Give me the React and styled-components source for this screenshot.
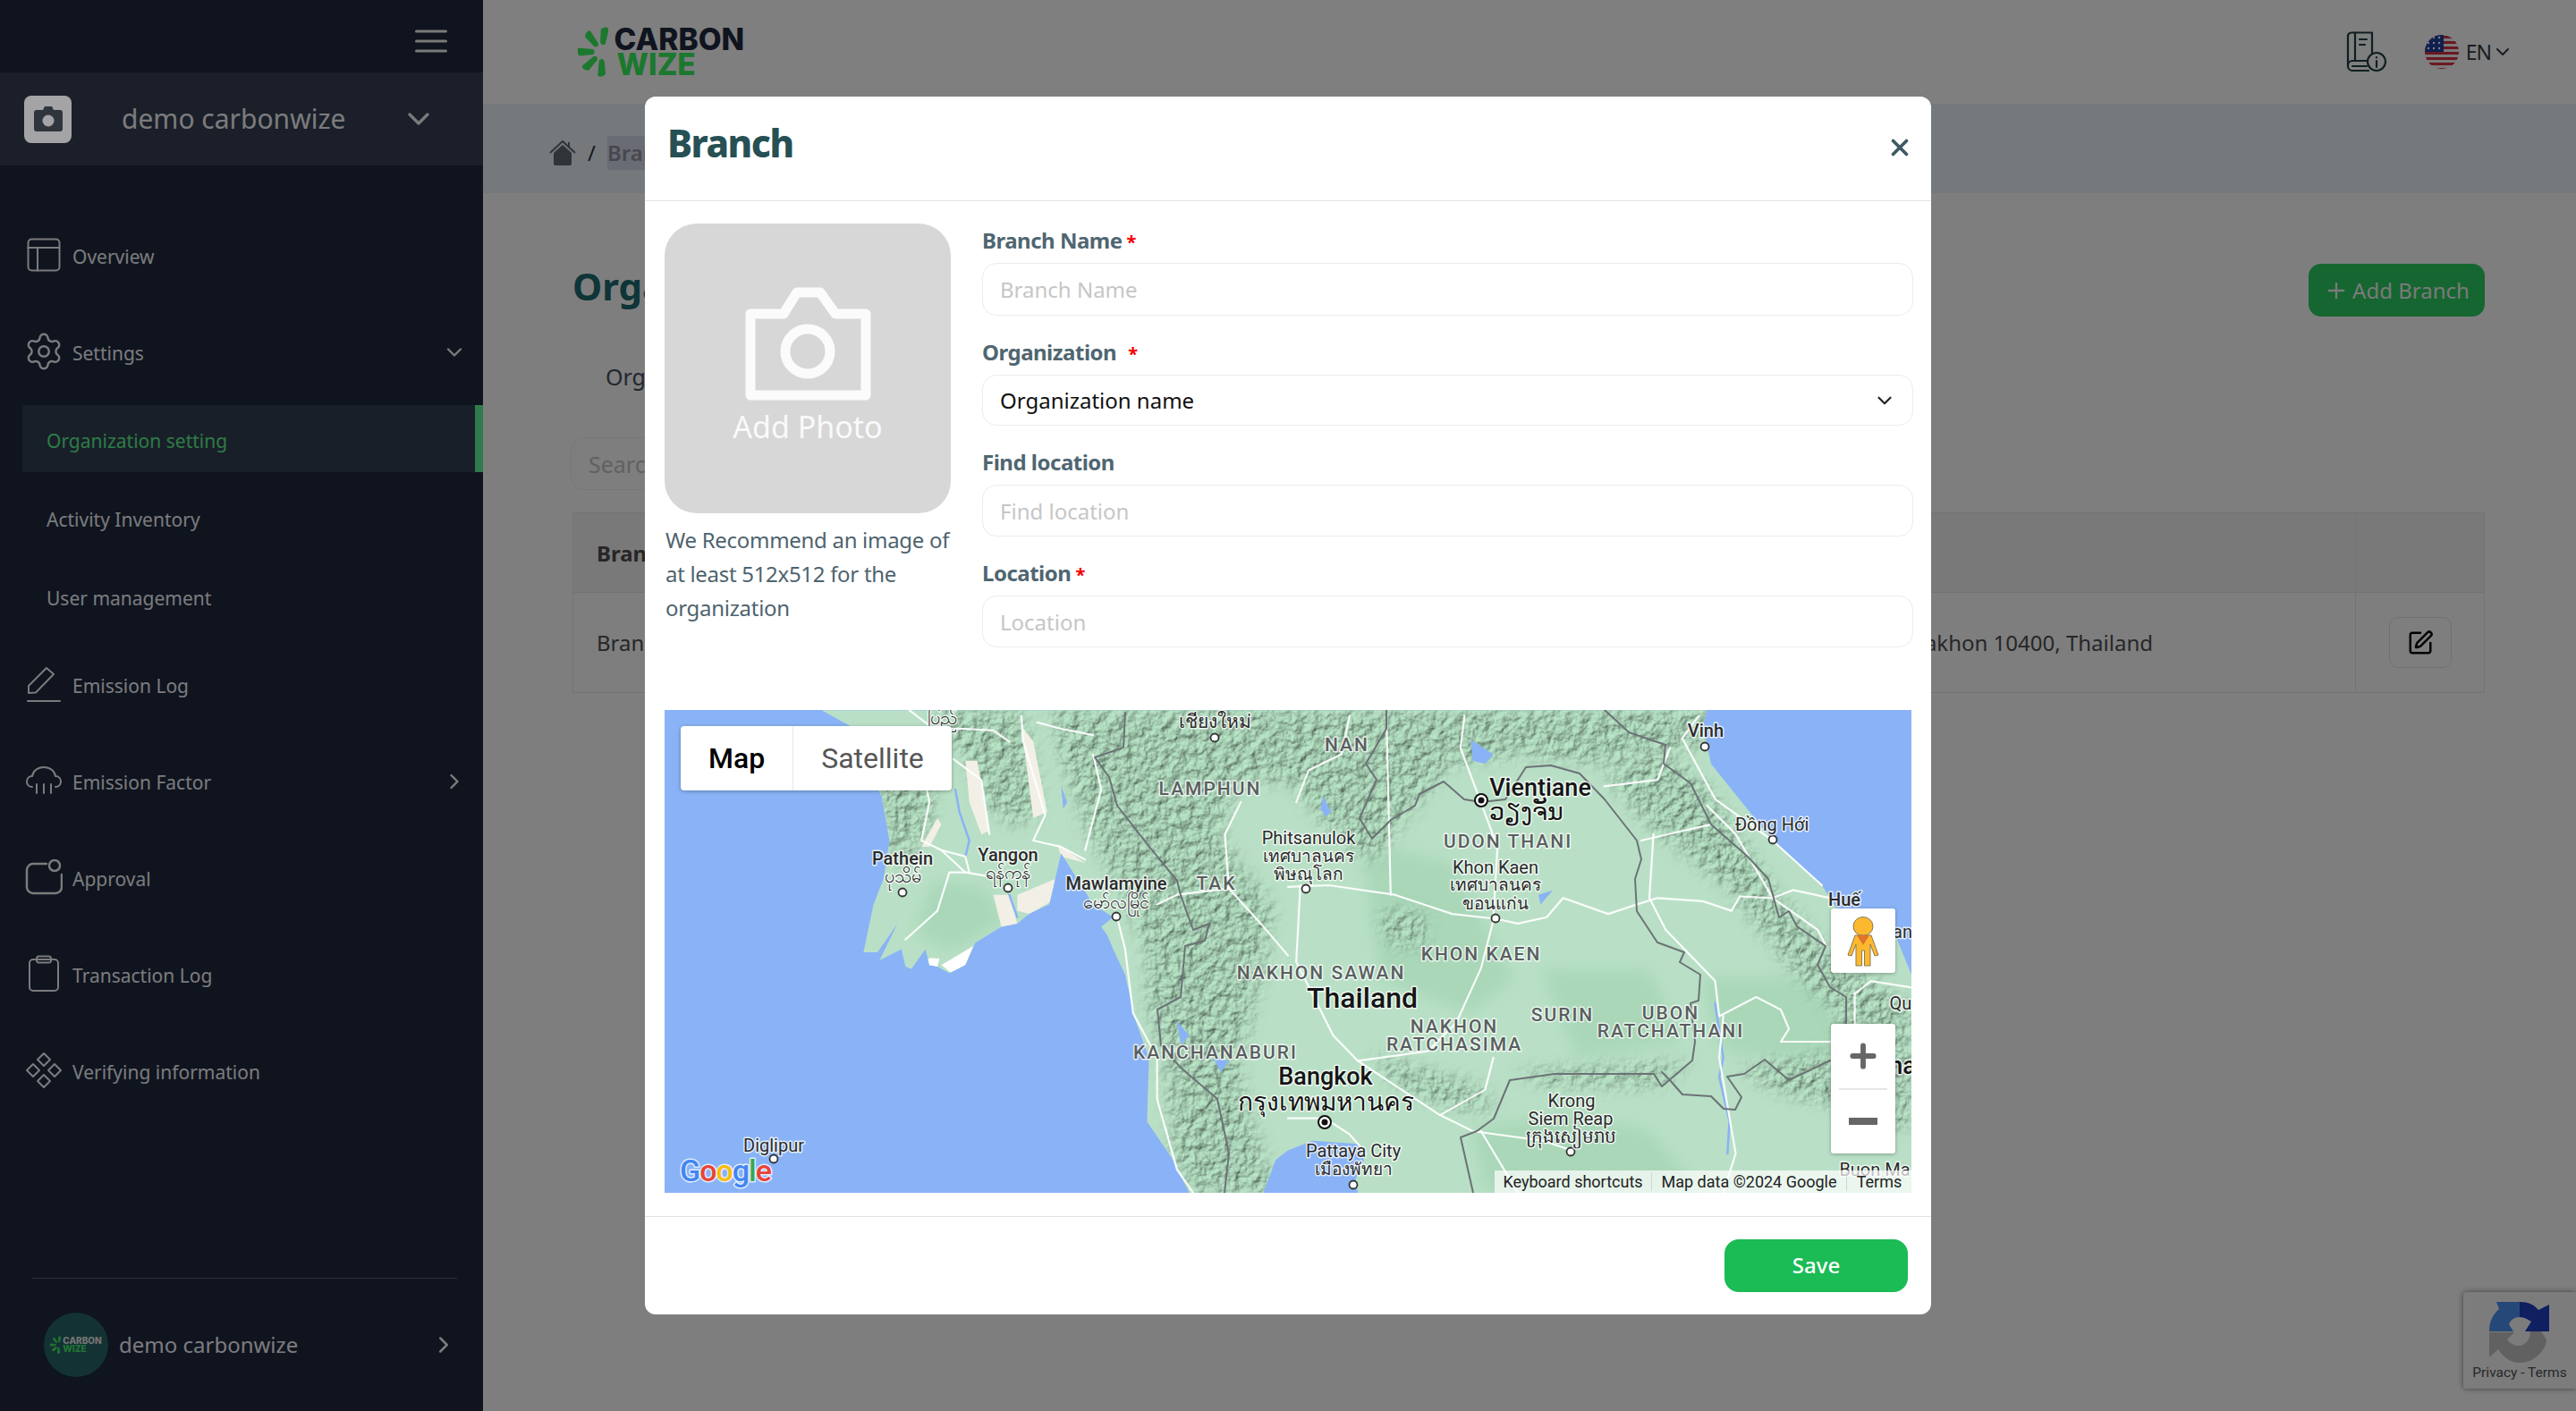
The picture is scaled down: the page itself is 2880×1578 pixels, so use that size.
import React from 'react';
import styled, { createGlobalStyle } from 'styled-components';
import { Settings, SquarePen, ChevronDown, ChevronRight, Plus, X } from 'lucide-react';

const GlobalStyle = createGlobalStyle`
  html, body { margin: 0; padding: 0; }
  body { font-family: "Noto Sans", "Open Sans", sans-serif; background: #fdfdfd; }
  * { box-sizing: border-box; }
`;

/* Layout */
const Page = styled.div`
  display: grid;
  grid-template-columns: 540px 1fr;
  width: 2880px;
  height: 1578px;
  overflow: hidden;
  position: relative;
`;

const Sidebar = styled.aside`
  display: flex;
  flex-direction: column;
  background: #1e283e;
  color: #f6f6fa;
`;

const BurgerBar = styled.div`
  height: 81px;
  display: flex;
  align-items: center;
  justify-content: flex-end;
  padding: 11px 40px 0 0;
`;

const OrgBar = styled.div`
  height: 104px;
  display: flex;
  align-items: center;
  padding: 0 52px 0 27px;
  background: #343e52;
`;

/* sits above the dimming layer, it stays lighter than the rest in the reference */
const OrgThumb = styled.div`
  position: relative;
  z-index: 1;
  width: 53px;
  height: 53px;
  border-radius: 8px;
  background: #a4a4a6;
  display: flex;
  align-items: center;
  justify-content: center;
`;

const OrgName = styled.div`
  flex: 1;
  margin-left: 56px;
  font-size: 30px;
  line-height: 40px;
`;

const Nav = styled.nav`
  margin-top: 26px;
  border-top: 1px solid #262f44;
  padding-top: 22px;
  display: flex;
  flex-direction: column;
`;

const NavRow = styled.div`
  height: 108px;
  display: flex;
  align-items: center;
  padding-left: 27px;
  padding-right: 18px;
  font-size: 21px;
  svg { flex-shrink: 0; }
`;

const NavIcon = styled.span`
  width: 44px;
  height: 48px;
  display: flex;
  align-items: center;
  justify-content: center;
  margin-right: 10px;
  margin-top: -6px;
`;

const NavLabel = styled.span`
  flex: 1;
  padding-bottom: 3px;
`;

const NavArrow = styled.span`
  display: flex;
  margin-top: -4px;
`;

const SubRow = styled.div`
  height: ${p => (p.$active ? 75 : 88)}px;
  margin: ${p => (p.$active ? '3px 0 10px 25px' : '0')};
  padding-left: ${p => (p.$active ? 27 : 52)}px;
  padding-top: ${p => (p.$active ? 4 : 0)}px;
  padding-bottom: ${p => (p.$active ? 0 : 3)}px;
  display: flex;
  align-items: center;
  font-size: 21px;
  color: ${p => (p.$active ? '#5cf58c' : 'inherit')};
  background: ${p => (p.$active ? '#303e52' : 'transparent')};
  border-right: ${p => (p.$active ? '9px solid #5cf898' : '0')};
`;

const UserBlock = styled.div`
  margin: auto 29px 38px 36px;
  border-top: 1px solid #5a6274;
  padding: 38px 0 0 13px;
  display: flex;
  align-items: center;
`;

const UserAvatar = styled.div`
  width: 72px;
  height: 72px;
  border-radius: 50%;
  background: #266468;
  display: flex;
  align-items: center;
  justify-content: center;
  gap: 2px;
`;

const AvatarWords = styled.div`
  font-family: Inter, sans-serif;
  font-weight: 800;
  font-size: 10px;
  line-height: 9px;
  color: #e6e6e6;
  span { display: block; color: #44e468; }
`;

const UserName = styled.div`
  flex: 1;
  margin-left: 12px;
  font-size: 24px;
  padding-bottom: 2px;
`;

const Main = styled.main`
  display: flex;
  flex-direction: column;
  min-width: 0;
`;

const TopBar = styled.header`
  height: 116px;
  display: flex;
  align-items: center;
  padding: 0 70px 0 106px;
  background: #ffffff;
`;

const Logo = styled.div`
  display: flex;
  align-items: center;
  gap: 7px;
  flex: 1;
`;

const LogoWords = styled.div`
  font-family: Inter, sans-serif;
  font-weight: 800;
  font-size: 33.500px;
  line-height: 28px;
  color: #1e283e;
  span { display: block; color: #38f05c; margin-left: 3px; }
`;

const TopActions = styled.div`
  display: flex;
  align-items: center;
  color: #333b45;
  font-size: 23px;
`;

const Lang = styled.span`
  margin: 0 1px 0 8px;
  letter-spacing: -1px;
`;

const Crumbs = styled.div`
  height: 100px;
  background: #eaf2f8;
  display: flex;
  align-items: center;
  padding: 9px 0 0 74px;
  gap: 13px;
  font-size: 24px;
  color: #2a3440;
`;

const CrumbCurrent = styled.span`
  background: #d4d9ea;
  color: #8d919c;
  font-weight: 600;
  line-height: 38px;
  padding-right: 60px;
`;

const Content = styled.div`
  padding: 79px 102px 0 100px;
`;

const TitleRow = styled.div`
  height: 59px;
  display: flex;
  align-items: center;
  justify-content: space-between;
`;

const PageTitle = styled.h1`
  margin: 0;
  padding-bottom: 10px;
  font-size: 42px;
  font-weight: 700;
  color: #1c6a70;
`;

const AddButton = styled.button`
  height: 59px;
  width: 197px;
  border: 0;
  border-radius: 14px;
  background: #2acc60;
  color: #f4f4f4;
  font: 400 24px "Noto Sans", sans-serif;
  display: flex;
  align-items: center;
  justify-content: center;
  gap: 4px;
`;

const TabLine = styled.div`
  margin-top: 44px;
  padding-left: 37px;
  font-size: 25px;
  line-height: 46px;
  color: #444e5c;
`;

const SearchBox = styled.div`
  margin-top: 45px;
  margin-left: -2px;
  width: 300px;
  height: 59px;
  border: 1px solid #eeeeee;
  border-radius: 16px;
  padding-left: 19px;
  display: flex;
  align-items: center;
  font-size: 25px;
  color: #c2c2c2;
`;

const Table = styled.div`
  margin-top: 25px;
  border: 1px solid #e6e6e6;
`;

const TableRow = styled.div`
  display: grid;
  grid-template-columns: 1fr 144px;
  height: ${p => (p.$head ? 89 : 111)}px;
  background: ${p => (p.$head ? '#f3f3f3' : 'transparent')};
  border-bottom: ${p => (p.$head ? '1px solid #e6e6e6' : '0')};
`;

const TableCell = styled.div`
  display: flex;
  align-items: center;
  justify-content: ${p => (p.$center ? 'center' : 'space-between')};
  padding: ${p => (p.$center ? '0' : '0 226px 0 26px')};
  border-left: ${p => (p.$center ? '1px solid #e6e6e6' : '0')};
  font-size: 24px;
  font-weight: ${p => (p.$head ? 700 : 400)};
  color: #4c4c50;
`;

const EditButton = styled.div`
  width: 70px;
  height: 57px;
  border: 1px solid #e0e0e0;
  border-radius: 10px;
  display: flex;
  align-items: center;
  justify-content: center;
  color: #000;
`;

const RecaptchaBadge = styled.div`
  position: absolute;
  right: 0;
  top: 1445px;
  width: 126px;
  height: 108px;
  background: #f9f9f9;
  border-radius: 3px 0 0 3px;
  box-shadow: 0 0 6px rgba(0, 0, 0, 0.5);
  display: flex;
  flex-direction: column;
  align-items: center;
  padding-top: 11px;
  font-family: Roboto, sans-serif;
  font-size: 15.500px;
  color: #505050;
  gap: 2px;
`;

/* Modal */
const Overlay = styled.div`
  position: absolute;
  inset: 0;
  background: rgba(0, 0, 0, 0.5);
  display: flex;
  justify-content: center;
  align-items: flex-start;
  padding-top: 108px;
`;

const Modal = styled.section`
  width: 1438px;
  height: 1362px;
  background: #fff;
  border-radius: 12px;
  display: flex;
  flex-direction: column;
`;

const ModalHead = styled.div`
  height: 117px;
  border-bottom: 1px solid #e3e3e3;
  display: flex;
  align-items: flex-start;
  justify-content: space-between;
  padding: 23px 20px 0 25px;
`;

const ModalTitle = styled.h2`
  margin: 0;
  font-size: 42px;
  line-height: 58px;
  font-weight: 800;
  letter-spacing: -1.500px;
  color: #265054;
`;

const CloseButton = styled.span`
  margin-top: 19px;
  color: #3f5a64;
  display: flex;
`;

const ModalBody = styled.div`
  padding: 25px 20px 0 22px;
`;

const FormGrid = styled.div`
  display: grid;
  grid-template-columns: 320px 1fr;
  gap: 35px;
  height: 544px;
`;

const PhotoColumn = styled.div`
  display: flex;
  flex-direction: column;
`;

const PhotoBox = styled.div`
  height: 324px;
  border-radius: 36px;
  background: #d7d7d7;
  display: flex;
  flex-direction: column;
  align-items: center;
  padding-top: 71px;
`;

const PhotoText = styled.div`
  font-size: 34px;
  line-height: 42px;
  color: #fafafa;
  margin-top: 8px;
`;

const PhotoHint = styled.p`
  margin: 11px 0 0 1px;
  font-size: 24px;
  line-height: 38px;
  letter-spacing: -0.3px;
  color: #4e636e;
`;

const Fields = styled.div`
  display: flex;
  flex-direction: column;
  gap: 22px;
`;

const Label = styled.label`
  display: block;
  height: 38px;
  margin-bottom: 6px;
  font-size: 24px;
  line-height: 37px;
  font-weight: 700;
  letter-spacing: -0.5px;
  color: #4f6671;
`;

const Req = styled.span`
  color: #f40000;
  font-size: 20px;
  margin-left: ${p => p.$gap || 5}px;
`;

const InputBox = styled.div`
  height: ${p => p.$h || 58}px;
  border: 1px solid #ececec;
  border-radius: 16px;
  padding: 0 18px 0 19px;
  display: flex;
  align-items: center;
  justify-content: space-between;
  font-size: 24px;
  color: ${p => (p.$filled ? '#111' : '#c6c6c6')};
`;

const MapFrame = styled.div`
  position: relative;
  width: 1394px;
  height: 540px;
  overflow: hidden;
  background: #89b3f6;
  font-family: Roboto, sans-serif;
`;

const MapSvg = styled.svg`
  display: block;
`;

const MapLabel = styled.text`
  font-family: Roboto, "Noto Sans", sans-serif;
  text-anchor: middle;
  font-size: ${p => p.$size || 20}px;
  font-weight: ${p => p.$weight || 400};
  letter-spacing: ${p => p.$track || 0}px;
  fill: ${p => p.$color || '#2b2b2b'};
  stroke: rgba(255, 255, 255, 0.75);
  stroke-width: 3px;
  paint-order: stroke;
  stroke-linejoin: round;
`;

const MapTypes = styled.div`
  position: absolute;
  left: 18px;
  top: 18px;
  height: 72px;
  display: flex;
  background: #fff;
  border-radius: 4px;
  box-shadow: 0 1px 4px rgba(0, 0, 0, 0.3);
`;

const MapType = styled.div`
  height: 72px;
  width: ${p => p.$w}px;
  display: flex;
  align-items: center;
  justify-content: center;
  font-size: 32px;
  font-weight: ${p => (p.$active ? 500 : 400)};
  color: ${p => (p.$active ? '#000' : '#565656')};
  border-left: ${p => (p.$active ? '0' : '1px solid #e6e6e6')};
`;

const MapButton = styled.div`
  position: absolute;
  right: 18px;
  top: ${p => p.$top}px;
  width: 72px;
  height: ${p => p.$h}px;
  padding-top: ${p => p.$pad || 0}px;
  background: #fff;
  border-radius: 3px;
  box-shadow: 0 1px 4px rgba(0, 0, 0, 0.3);
  display: flex;
  flex-direction: column;
  align-items: center;
`;

const ZoomPart = styled.div`
  flex: 1;
  width: 54px;
  display: flex;
  align-items: center;
  justify-content: center;
  border-bottom: ${p => (p.$split ? '2px solid #e6e6e6' : '0')};
`;

const MapFooter = styled.div`
  position: absolute;
  right: 0;
  bottom: 0;
  height: 25px;
  width: 466px;
  display: flex;
  align-items: center;
  background: rgba(255, 255, 255, 0.7);
  font-size: 18px;
  color: #222;
  white-space: nowrap;
`;

const FooterCell = styled.span`
  width: ${p => p.$w}px;
  text-align: center;
  border-right: ${p => (p.$line ? '1px solid #d5d5d5' : '0')};
`;

const ModalFoot = styled.div`
  margin-top: 26px;
  border-top: 1px solid #e3e3e3;
  flex: 1;
  display: flex;
  justify-content: flex-end;
  padding: 25px 26px 0 0;
`;

const SaveButton = styled.button`
  width: 205px;
  height: 59px;
  border: 0;
  border-radius: 16px;
  background: #1bbb55;
  color: #fff;
  font: 500 24px "Noto Sans", sans-serif;
  padding-bottom: 3px;
`;

/* Icons */
const line = { fill: 'none', stroke: 'currentColor', strokeLinecap: 'round', strokeLinejoin: 'round' };

const Burger = () => (
  <svg width="36" height="26" viewBox="0 0 36 26" {...line} strokeWidth="3" color="#f4f4f4">
    <path d="M1.5 2h33M1.5 13h33M1.5 24h33" />
  </svg>
);

const OverviewIcon = () => (
  <svg width="38" height="38" viewBox="0 0 38 38" {...line} strokeWidth="2">
    <rect x="1.5" y="1.5" width="35" height="35" rx="4" />
    <path d="M1.5 11h35M12 11v25.5" />
  </svg>
);

const PencilIcon = () => (
  <svg width="38" height="42" viewBox="0 0 38 42" {...line} strokeWidth="2">
    <path d="M2 31v-8L22 3l8 7-20 20.500z" />
    <path d="M1 40h36" />
  </svg>
);

const CloudIcon = () => (
  <svg width="40" height="32" viewBox="0 0 40 32" {...line} strokeWidth="2">
    <path d="M7 23C3 23 1 20 1 17c0-3 2-6 6-6 1-6 6-10 13-10 7 0 12 4 13 10 4 0 6 3 6 6s-2 6-6 6" />
    <path d="M12 20v10M20 20v10M28 20v10" />
  </svg>
);

const ApprovalIcon = () => (
  <svg width="42" height="40" viewBox="0 0 42 40" {...line} strokeWidth="2.500">
    <path d="M24 5H9a7 7 0 0 0-7 7v19a7 7 0 0 0 7 7h25a7 7 0 0 0 7-7v-14" />
    <circle cx="33" cy="7" r="6" />
  </svg>
);

const ClipboardIcon = () => (
  <svg width="36" height="42" viewBox="0 0 36 42" {...line} strokeWidth="2">
    <rect x="2" y="5" width="32" height="35" rx="4" />
    <rect x="10" y="1.500" width="16" height="7" rx="2.500" />
  </svg>
);

const DiamondsIcon = () => (
  <svg width="42" height="42" viewBox="0 0 42 42" {...line} strokeWidth="2">
    <path d="M21 2l7 7-7 7-7-7zM9 14l7 7-7 7-7-7zM33 14l7 7-7 7-7-7zM21 26l7 7-7 7-7-7z" />
  </svg>
);

const SmallCamera = () => (
  <svg width="32" height="28" viewBox="0 0 32 28" fill="#2f353d">
    <path d="M3 4h7l2-4h8l2 4h7a3 3 0 0 1 3 3v18a3 3 0 0 1-3 3H3a3 3 0 0 1-3-3V7a3 3 0 0 1 3-3z" />
    <circle cx="16" cy="16" r="6.500" fill="#a4a4a6" />
  </svg>
);

const BigCamera = () => (
  <svg width="141" height="127" viewBox="0 0 141 127" fill="none" stroke="#fbfbfb" strokeWidth="11" strokeLinejoin="round">
    <path d="M6 30h37L58 6h26l17 24h34v91H6z" />
    <ellipse cx="70" cy="72" rx="25" ry="25" />
  </svg>
);

const Petals = ({ size, fill }) => (
  <svg width={size * 0.6} height={size} viewBox="0 0 34 56" fill={fill}>
    {[8, -38, -90, -135, 180].map(r => (
      <path key={r} d="M-4.500 -25q4.500 -5 9 -2 l-1.500 17 q-3 4-6 0z" transform={`translate(27 28) rotate(${r})`} />
    ))}
  </svg>
);

const HomeIcon = () => (
  <svg width="30" height="28" viewBox="0 0 30 28" fill="#5e6870">
    <path d="M5 14L15 5l10 9v12a2 2 0 0 1-2 2H7a2 2 0 0 1-2-2z" />
    <path d="M1 14L15 1l14 13M22 2v6" fill="none" stroke="#5e6870" strokeWidth="2" />
  </svg>
);

const BookIcon = () => (
  <svg width="46" height="46" viewBox="0 0 46 46" {...line} strokeWidth="2.200" color="#1f3e42" style={{ marginRight: 43 }}>
    <path d="M30 24V1.500H7A4 4 0 0 0 3 6v33a5 5 0 0 0 5 5h18" />
    <path d="M3 38a5 5 0 0 1 5-5h17M11 1.500V33M16 9h8M16 15h6M8 39h16" />
    <circle cx="35" cy="34" r="10" />
    <path d="M35 33v7M35 29v.5" />
  </svg>
);

const FlagIcon = () => (
  <svg width="38" height="40" viewBox="0 0 38 40">
    <defs>
      <clipPath id="flagDisc"><circle cx="19" cy="20" r="19" /></clipPath>
    </defs>
    <g clipPath="url(#flagDisc)">
      <rect width="38" height="40" fill="#f5f5f5" />
      {[0, 6, 12, 18, 24, 30, 36].map(y => <rect key={y} y={y + 2} width="38" height="3" fill="#d43040" />)}
      <rect width="21" height="20" fill="#1e3f9c" />
      {[4, 10, 16].map(x => [4, 10, 16].map(y => <circle key={x + '-' + y} cx={x} cy={y} r="1.200" fill="#fff" />))}
    </g>
  </svg>
);

const RecaptchaIcon = () => (
  <svg width="68" height="68" viewBox="0 0 68 68">
    <path d="M8 0H34V17C28 17 24 20 22 25L27 33H0C0 22 4 14 11 8Z" fill="#4a90f0" />
    <path d="M34 0C44 0 50 3 55 9L67 3V33H40L47 22C44 20 39 17 34 17Z" fill="#1f3ec0" />
    <path d="M0 34V62L10 53C16 62 24 68 34 68C50 68 64 54 64 42L58 33H46C46 42 40 49 33 49C27 49 23 46 20 42L28 34Z" fill="#c2c2c2" />
  </svg>
);

const Pegman = () => (
  <svg width="36" height="56" viewBox="0 0 36 56" stroke="#8a7a55" strokeWidth="1" fill="#fdb92e">
    <ellipse cx="18" cy="11" rx="11" ry="10.500" />
    <path d="M9 21h18l8 22-4 1-5-13v24h-6.500V38h-3v17H10V31L5 44l-4-1z" />
    <path d="M11 21h14l-7 11z" fill="#e0762a" stroke="none" />
  </svg>
);

/* Map data: a and b take points read off the two reference crops */
const a = pts => pts.map(([x, y]) => [x / 2.24 - 3, y / 2.8 - 4]);
const b = pts => pts.map(([x, y]) => [x / 2.178 + 697, y / 2.8 - 4]);
const pathOf = (pts, close) => 'M' + pts.map(p => p[0].toFixed(1) + ' ' + p[1].toFixed(1)).join('L') + (close ? 'Z' : '');

const land = [
  ...a([[400, 12], [470, 60], [470, 100], [550, 280], [570, 420], [555, 540], [530, 620], [505, 770], [540, 770], [590, 680], [545, 795], [600, 760], [610, 815], [625, 822], [660, 760], [670, 810], [690, 815], [720, 835], [760, 810], [785, 740], [850, 690], [890, 680], [920, 650], [970, 620], [985, 540], [1000, 460], [1030, 520], [1080, 620], [1130, 660], [1100, 690], [1115, 715], [1130, 760], [1160, 840], [1185, 980], [1220, 1100], [1215, 1300], [1280, 1420], [1320, 1523]]),
  [1394, 540],
  ...b([[1518, 840], [1480, 720], [1340, 640], [1300, 560], [1180, 420], [1030, 180], [1010, 60], [1020, 12]]),
];

const gulf = b([[-60, 1523], [-30, 1420], [0, 1390], [60, 1360], [170, 1370], [185, 1420], [165, 1480], [170, 1523]]);

const hills = [
  [[240, 60], [300, 60], [300, 120], [270, 170], [250, 170]],
  [[300, 0], [400, 0], [415, 70], [420, 110], [395, 130], [360, 110], [340, 60]],
  [[430, 0], [1170, 0], [1160, 40], [1040, 60], [960, 50], [880, 60], [830, 120], [790, 170], [740, 130], [700, 80], [640, 80], [620, 140], [680, 220], [670, 290], [640, 400], [670, 500], [690, 540], [590, 540], [570, 500], [560, 400], [540, 330], [540, 270], [510, 200], [470, 130], [450, 70]],
  [[1050, 70], [1120, 50], [1170, 90], [1240, 200], [1300, 270], [1330, 290], [1394, 330], [1394, 430], [1320, 400], [1310, 340], [1260, 290], [1190, 200], [1100, 130]],
  [[1200, 400], [1300, 385], [1394, 400], [1394, 470], [1300, 440], [1240, 425]],
  [[790, 385], [840, 400], [910, 420], [930, 445], [880, 445], [820, 420]],
  [[800, 225], [850, 225], [850, 265], [810, 265]],
  [[950, 405], [1150, 395], [1110, 420], [990, 420]],
];

const midPatches = [
  [[780, 150], [880, 170], [950, 300], [900, 340], [800, 300]],
  [[300, 190], [360, 200], [380, 235], [320, 270], [280, 250]],
  [[980, 290], [1100, 290], [1140, 370], [1020, 390]],
  [[900, 470], [1000, 450], [1100, 470], [1160, 540], [920, 540]],
  [[1160, 300], [1300, 300], [1320, 400], [1180, 380]],
];

const urban = [
  a([[760, 170], [790, 170], [820, 390], [800, 400], [770, 300]]),
  a([[900, 60], [930, 110], [965, 330], [930, 350]]),
  a([[890, 590], [985, 540], [975, 610], [920, 650], [890, 640]]),
  a([[830, 590], [870, 590], [890, 680], [850, 690]]),
  a([[990, 430], [1060, 490], [1000, 470]]),
  a([[650, 440], [690, 350], [700, 370], [670, 440]]),
];

const snow = [
  a([[650, 818], [670, 788], [695, 790], [690, 815]]),
  a([[700, 810], [780, 750], [760, 810], [725, 835]]),
];

const lakes = [
  b([[445, 105], [500, 150], [480, 180], [450, 170]]),
  b([[85, 280], [105, 330], [90, 345], [80, 320]]),
  a([[1000, 250], [1015, 300], [1005, 320]]),
  a([[1290, 985], [1320, 1030], [1300, 1060]]),
  a([[1380, 1100], [1420, 1110], [1400, 1145]]),
  b([[610, 590], [645, 575], [615, 620]]),
];

const rivers = [
  a([[735, 260], [745, 330], [770, 420], [760, 470]]),
  a([[870, 590], [890, 660]]),
  b([[1040, 930], [1060, 1100], [1050, 1160], [1075, 1300], [1070, 1400]]),
];

const roads = [
  ...[
    [[620, 12], [680, 70], [760, 70], [830, 75], [870, 110]],
    [[730, 165], [800, 230], [820, 400]],
    [[900, 30], [905, 110], [960, 340], [930, 420], [1000, 440], [1060, 480]],
    [[1080, 150], [1100, 260], [1060, 450]],
    [[660, 240], [670, 300], [650, 420], [700, 450], [760, 520], [810, 530]],
    [[700, 450], [760, 470], [770, 520], [720, 520], [690, 640], [610, 730]],
    [[1140, 660], [1160, 760], [1180, 960], [1240, 1100], [1240, 1230], [1290, 1450], [1330, 1523]],
    [[1240, 620], [1290, 590], [1420, 570], [1500, 680], [1568, 780]],
    [[1450, 300], [1410, 400], [1420, 570]],
    [[940, 50], [1000, 70], [1080, 90]],
  ].map(a),
  ...[
    [[0, 565], [100, 560], [260, 590], [400, 650], [505, 665], [560, 680], [630, 660], [670, 600], [780, 650], [850, 620], [900, 600], [1010, 610], [1080, 640], [1100, 595], [1180, 600], [1230, 575], [1320, 600]],
    [[500, 670], [470, 820], [410, 990], [340, 1080], [170, 1110]],
    [[30, 560], [20, 800], [110, 1030], [170, 1110], [370, 1280], [450, 1330], [620, 1360], [690, 1390]],
    [[430, 30], [420, 130], [510, 440], [500, 660]],
    [[20, 300], [50, 200], [130, 150], [150, 30]],
    [[770, 250], [900, 230], [930, 130]],
    [[890, 400], [880, 600], [920, 700], [1040, 860], [1050, 970], [1140, 910], [1200, 950], [1220, 1010], [1200, 1050], [1320, 1050]],
    [[1060, 970], [1050, 1100], [1090, 1400], [1060, 1523]],
    [[860, 420], [960, 390], [1030, 370]],
    [[1000, 30], [960, 100], [1040, 290], [1180, 420], [1300, 560]],
    [[1020, 310], [1090, 400], [1180, 600]],
    [[0, 1290], [90, 1290], [150, 1340], [190, 1400]],
    [[500, 1100], [480, 1200], [370, 1280]],
    [[470, 1330], [560, 1523]],
    [[1380, 900], [1420, 860], [1518, 880]],
    [[1380, 900], [1380, 1040]],
    [[250, 590], [240, 50]],
    [[1180, 600], [1290, 700], [1310, 750]],
  ].map(b),
];

const borders = [
  [[515, 3], [513, 42], [481, 53], [497, 75], [506, 107], [542, 153], [573, 191], [577, 207], [591, 246], [609, 239], [604, 258], [582, 264], [577, 321], [551, 335], [555, 375], [577, 400], [618, 435], [631, 496], [626, 540]],
  [[807, 0], [807, 21], [784, 60], [796, 78], [777, 121], [791, 144], [812, 123], [839, 107], [844, 94], [871, 80], [894, 100], [913, 103], [940, 100], [963, 64], [991, 62], [1023, 71], [1051, 100], [1087, 146], [1092, 167], [1085, 189], [1087, 225], [1110, 260], [1140, 271], [1135, 282], [1158, 296], [1156, 325], [1147, 328], [1152, 371], [1149, 392], [1115, 421], [1106, 407], [995, 407], [945, 414], [927, 457], [908, 471], [890, 478], [904, 540]],
  [[1115, 405], [1124, 414], [1138, 430], [1170, 432], [1184, 446], [1197, 447], [1204, 433], [1188, 410], [1207, 407], [1230, 391], [1257, 414], [1303, 392]],
  [[1051, 0], [1078, 25], [1119, 39], [1117, 60], [1147, 82], [1170, 128], [1211, 164], [1234, 189], [1246, 232], [1257, 225], [1266, 242], [1298, 264], [1289, 285], [1303, 310], [1321, 321], [1321, 353]],
];

const province = { $color: '#5a5f60', $track: 2, $size: 21, $weight: 500 };

const labels = [
  { t: 'ပြည်', x: 310, y: 16, $size: 20 },
  { t: 'เชียงใหม่', x: 615, y: 20, $size: 21 },
  { t: 'LAMPHUN', x: 610, y: 95, ...province },
  { t: 'Pathein', x: 266, y: 173, $weight: 500 },
  { t: 'ပုသိမ်', x: 266, y: 193 },
  { t: 'Yangon', x: 384, y: 169, $weight: 500 },
  { t: 'ရန်ကုန်', x: 384, y: 189 },
  { t: 'Mawlamyine', x: 505, y: 201, $weight: 500 },
  { t: 'မော်လမြိုင်', x: 505, y: 222 },
  { t: 'TAK', x: 617, y: 201, ...province },
  { t: 'NAN', x: 763, y: 46, ...province },
  { t: 'Phitsanulok', x: 720, y: 150, $size: 20 },
  { t: 'เทศบาลนคร', x: 720, y: 170, $size: 19 },
  { t: 'พิษณุโลก', x: 720, y: 190, $size: 19 },
  { t: 'KANCHANABURI', x: 616, y: 390, ...province },
  { t: 'NAKHON SAWAN', x: 734, y: 301, ...province },
  { t: 'Thailand', x: 780, y: 333, $size: 32, $weight: 500, $color: '#151515' },
  { t: 'Bangkok', x: 739, y: 419, $size: 27, $weight: 500, $color: '#151515' },
  { t: 'กรุงเทพมหานคร', x: 739, y: 448, $size: 28, $weight: 500, $color: '#151515' },
  { t: 'Pattaya City', x: 770, y: 500, $size: 20 },
  { t: 'เมืองพัทยา', x: 770, y: 520, $size: 19 },
  { t: 'Vientiane', x: 979, y: 96, $size: 27, $weight: 500, $color: '#151515' },
  { t: 'ວຽງຈັນ', x: 963, y: 123, $size: 27, $weight: 500, $color: '#151515' },
  { t: 'UDON THANI', x: 943, y: 154, ...province },
  { t: 'Khon Kaen', x: 929, y: 183, $size: 20 },
  { t: 'เทศบาลนคร', x: 929, y: 202, $size: 19 },
  { t: 'ขอนแก่น', x: 929, y: 223, $size: 19 },
  { t: 'KHON KAEN', x: 913, y: 280, ...province },
  { t: 'NAKHON', x: 883, y: 361, ...province },
  { t: 'RATCHASIMA', x: 883, y: 381, ...province },
  { t: 'SURIN', x: 1004, y: 348, ...province },
  { t: 'UBON', x: 1125, y: 346, ...province },
  { t: 'RATCHATHANI', x: 1125, y: 366, ...province },
  { t: 'Krong', x: 1014, y: 444, $size: 20 },
  { t: 'Siem Reap', x: 1013, y: 464, $size: 20 },
  { t: 'ក្រុងសៀមរាប', x: 1013, y: 484, $size: 20 },
  { t: 'Vinh', x: 1164, y: 30, $size: 20, $weight: 500 },
  { t: 'Đồng Hới', x: 1238, y: 135, $size: 20 },
  { t: 'Huế', x: 1319, y: 219, $size: 20, $weight: 500 },
  { t: 'an', x: 1384, y: 255, $size: 20 },
  { t: 'Qu', x: 1382, y: 335, $size: 20 },
  { t: 'na', x: 1384, y: 407, $size: 27, $weight: 500, $color: '#151515' },
  { t: 'Buon Ma', x: 1353, y: 521, $size: 20 },
  { t: 'Diglipur', x: 122, y: 494, $size: 20 },
];

const dots = [[266, 204], [384, 199], [505, 231], [615, 31], [717, 200], [929, 233], [1013, 494], [1163, 41], [1239, 145], [770, 531], [122, 502]];
const capitals = [[913, 101], [738, 461]];

const MapArt = () => (
  <MapSvg width="1394" height="540" viewBox="0 0 1394 540">
    <defs>
      <filter id="relief" x="0" y="0" width="100%" height="100%" colorInterpolationFilters="sRGB">
        <feTurbulence type="fractalNoise" baseFrequency="0.1" numOctaves="4" seed="7" result="n" />
        <feDiffuseLighting in="n" surfaceScale="2.600" diffuseConstant="1.030" lightingColor="#b4e0c2">
          <feDistantLight azimuth="225" elevation="62" />
        </feDiffuseLighting>
      </filter>
      <filter id="soft"><feGaussianBlur stdDeviation="9" /></filter>
      <clipPath id="landClip"><path d={pathOf(land, true)} /></clipPath>
      <mask id="hillMask">
        <g fill="#fff" filter="url(#soft)">
          {hills.map((h, i) => <path key={i} d={pathOf(h, true)} />)}
        </g>
      </mask>
    </defs>
    <path d={pathOf(land, true)} fill="#b9e0c6" />
    <g clipPath="url(#landClip)">
      <g fill="#a9d7b8" filter="url(#soft)">
        {midPatches.map((h, i) => <path key={i} d={pathOf(h, true)} />)}
      </g>
      <g mask="url(#hillMask)">
        <rect width="1394" height="540" filter="url(#relief)" />
      </g>
      {urban.map((h, i) => <path key={i} d={pathOf(h, true)} fill="#f2efe6" />)}
      {snow.map((h, i) => <path key={i} d={pathOf(h, true)} fill="#fff" />)}
    </g>
    <path d={pathOf(gulf, true)} fill="#89b3f6" />
    {lakes.map((h, i) => <path key={i} d={pathOf(h, true)} fill="#89b3f6" />)}
    <g fill="none" strokeLinejoin="round" strokeLinecap="round">
      {rivers.map((r, i) => <path key={i} d={pathOf(r)} stroke="#89b3f6" strokeWidth="2.500" />)}
      {roads.map((r, i) => <path key={i} d={pathOf(r)} stroke="#fff" strokeWidth="2.200" opacity="0.92" />)}
      {borders.map((r, i) => <path key={i} d={pathOf(r)} stroke="#6c7276" strokeWidth="2" />)}
    </g>
    {dots.map(([x, y]) => <circle key={x} cx={x} cy={y} r="4.500" fill="#fff" stroke="#333" strokeWidth="1.800" />)}
    {capitals.map(([x, y]) => (
      <g key={x}>
        <circle cx={x} cy={y} r="7" fill="#fff" stroke="#111" strokeWidth="2" />
        <circle cx={x} cy={y} r="3.500" fill="#111" />
      </g>
    ))}
    {labels.map(({ t, x, y, ...rest }) => <MapLabel key={t + x} x={x} y={y} {...rest}>{t}</MapLabel>)}
    <MapLabel x="68" y="527" $size={34} $weight={500} $track={-1} $color="#4285f4">
      G<tspan fill="#ea4335">o</tspan><tspan fill="#fbbc05">o</tspan>g<tspan fill="#34a853">l</tspan><tspan fill="#ea4335">e</tspan>
    </MapLabel>
  </MapSvg>
);

const navTop = [
  { label: 'Overview', icon: <OverviewIcon /> },
  { label: 'Settings', icon: <Settings size={46} strokeWidth={1.3} />, arrow: <ChevronDown size={28} strokeWidth={2} /> },
];

const navBottom = [
  { label: 'Emission Log', icon: <PencilIcon /> },
  { label: 'Emission Factor', icon: <CloudIcon />, arrow: <ChevronRight size={28} strokeWidth={2} /> },
  { label: 'Approval', icon: <ApprovalIcon /> },
  { label: 'Transaction Log', icon: <ClipboardIcon /> },
  { label: 'Verifying information', icon: <DiamondsIcon /> },
];

const subItems = [
  { label: 'Organization setting', active: true },
  { label: 'Activity Inventory' },
  { label: 'User management' },
];

const fields = [
  { label: 'Branch Name', req: 5, text: 'Branch Name', h: 59 },
  { label: 'Organization', req: 13, text: 'Organization name', h: 57, filled: true },
  { label: 'Find location', text: 'Find location', h: 58 },
  { label: 'Location', req: 5, text: 'Location', h: 58 },
];

const NavItem = ({ item }) => (
  <NavRow>
    <NavIcon>{item.icon}</NavIcon>
    <NavLabel>{item.label}</NavLabel>
    {item.arrow && <NavArrow>{item.arrow}</NavArrow>}
  </NavRow>
);

export default function App() {
  return (
    <>
      <GlobalStyle />
      <Page>
        <Sidebar>
          <BurgerBar><Burger /></BurgerBar>
          <OrgBar>
            <OrgThumb><SmallCamera /></OrgThumb>
            <OrgName>demo carbonwize</OrgName>
            <ChevronDown size={40} strokeWidth={2} />
          </OrgBar>
          <Nav>
            {navTop.map(item => <NavItem key={item.label} item={item} />)}
            {subItems.map(s => <SubRow key={s.label} $active={s.active}>{s.label}</SubRow>)}
            {navBottom.map(item => <NavItem key={item.label} item={item} />)}
          </Nav>
          <UserBlock>
            <UserAvatar>
              <Petals size={20} fill="#44e468" />
              <AvatarWords>CARBON<span>WIZE</span></AvatarWords>
            </UserAvatar>
            <UserName>demo carbonwize</UserName>
            <ChevronRight size={30} strokeWidth={2} />
          </UserBlock>
        </Sidebar>

        <Main>
          <TopBar>
            <Logo>
              <Petals size={56} fill="#38f05c" />
              <LogoWords>CARBON<span>WIZE</span></LogoWords>
            </Logo>
            <TopActions>
              <BookIcon />
              <FlagIcon />
              <Lang>EN</Lang>
              <ChevronDown size={24} strokeWidth={2} />
            </TopActions>
          </TopBar>
          <Crumbs>
            <HomeIcon />
            <span>/</span>
            <CrumbCurrent>Branch</CrumbCurrent>
          </Crumbs>
          <Content>
            <TitleRow>
              <PageTitle>Organization setting</PageTitle>
              <AddButton><Plus size={28} strokeWidth={2} /> Add Branch</AddButton>
            </TitleRow>
            <TabLine>Organization</TabLine>
            <SearchBox>Search</SearchBox>
            <Table>
              <TableRow $head>
                <TableCell $head>Branch</TableCell>
                <TableCell $center />
              </TableRow>
              <TableRow>
                <TableCell>
                  <span>Branch</span>
                  <span>Phaya Thai, Ratchathewi, Krung Thep Maha Nakhon 10400, Thailand</span>
                </TableCell>
                <TableCell $center><EditButton><SquarePen size={30} strokeWidth={2} /></EditButton></TableCell>
              </TableRow>
            </Table>
          </Content>
        </Main>

        <RecaptchaBadge>
          <RecaptchaIcon />
          <span>Privacy - Terms</span>
        </RecaptchaBadge>

        <Overlay>
          <Modal>
            <ModalHead>
              <ModalTitle>Branch</ModalTitle>
              <CloseButton><X size={30} strokeWidth={3} /></CloseButton>
            </ModalHead>
            <ModalBody>
              <FormGrid>
                <PhotoColumn>
                  <PhotoBox>
                    <BigCamera />
                    <PhotoText>Add Photo</PhotoText>
                  </PhotoBox>
                  <PhotoHint>We Recommend an image of at least 512x512 for the organization</PhotoHint>
                </PhotoColumn>
                <Fields>
                  {fields.map(f => (
                    <div key={f.label}>
                      <Label>{f.label}{f.req && <Req $gap={f.req}>*</Req>}</Label>
                      <InputBox $h={f.h} $filled={f.filled}>
                        {f.text}
                        {f.filled && <ChevronDown size={26} strokeWidth={2} color="#222" />}
                      </InputBox>
                    </div>
                  ))}
                </Fields>
              </FormGrid>
              <MapFrame>
                <MapArt />
                <MapTypes>
                  <MapType $active $w={125}>Map</MapType>
                  <MapType $w={178}>Satellite</MapType>
                </MapTypes>
                <MapButton $top={222} $h={72} $pad={9}><Pegman /></MapButton>
                <MapButton $top={351} $h={145}>
                  <ZoomPart $split><Plus size={40} strokeWidth={3.500} color="#666" /></ZoomPart>
                  <ZoomPart><svg width="32" height="8"><rect width="32" height="8" fill="#666" /></svg></ZoomPart>
                </MapButton>
                <MapFooter>
                  <FooterCell $w={176} $line>Keyboard shortcuts</FooterCell>
                  <FooterCell $w={218} $line>Map data ©2024 Google</FooterCell>
                  <FooterCell $w={72}>Terms</FooterCell>
                </MapFooter>
              </MapFrame>
            </ModalBody>
            <ModalFoot>
              <SaveButton>Save</SaveButton>
            </ModalFoot>
          </Modal>
        </Overlay>
      </Page>
    </>
  );
}
